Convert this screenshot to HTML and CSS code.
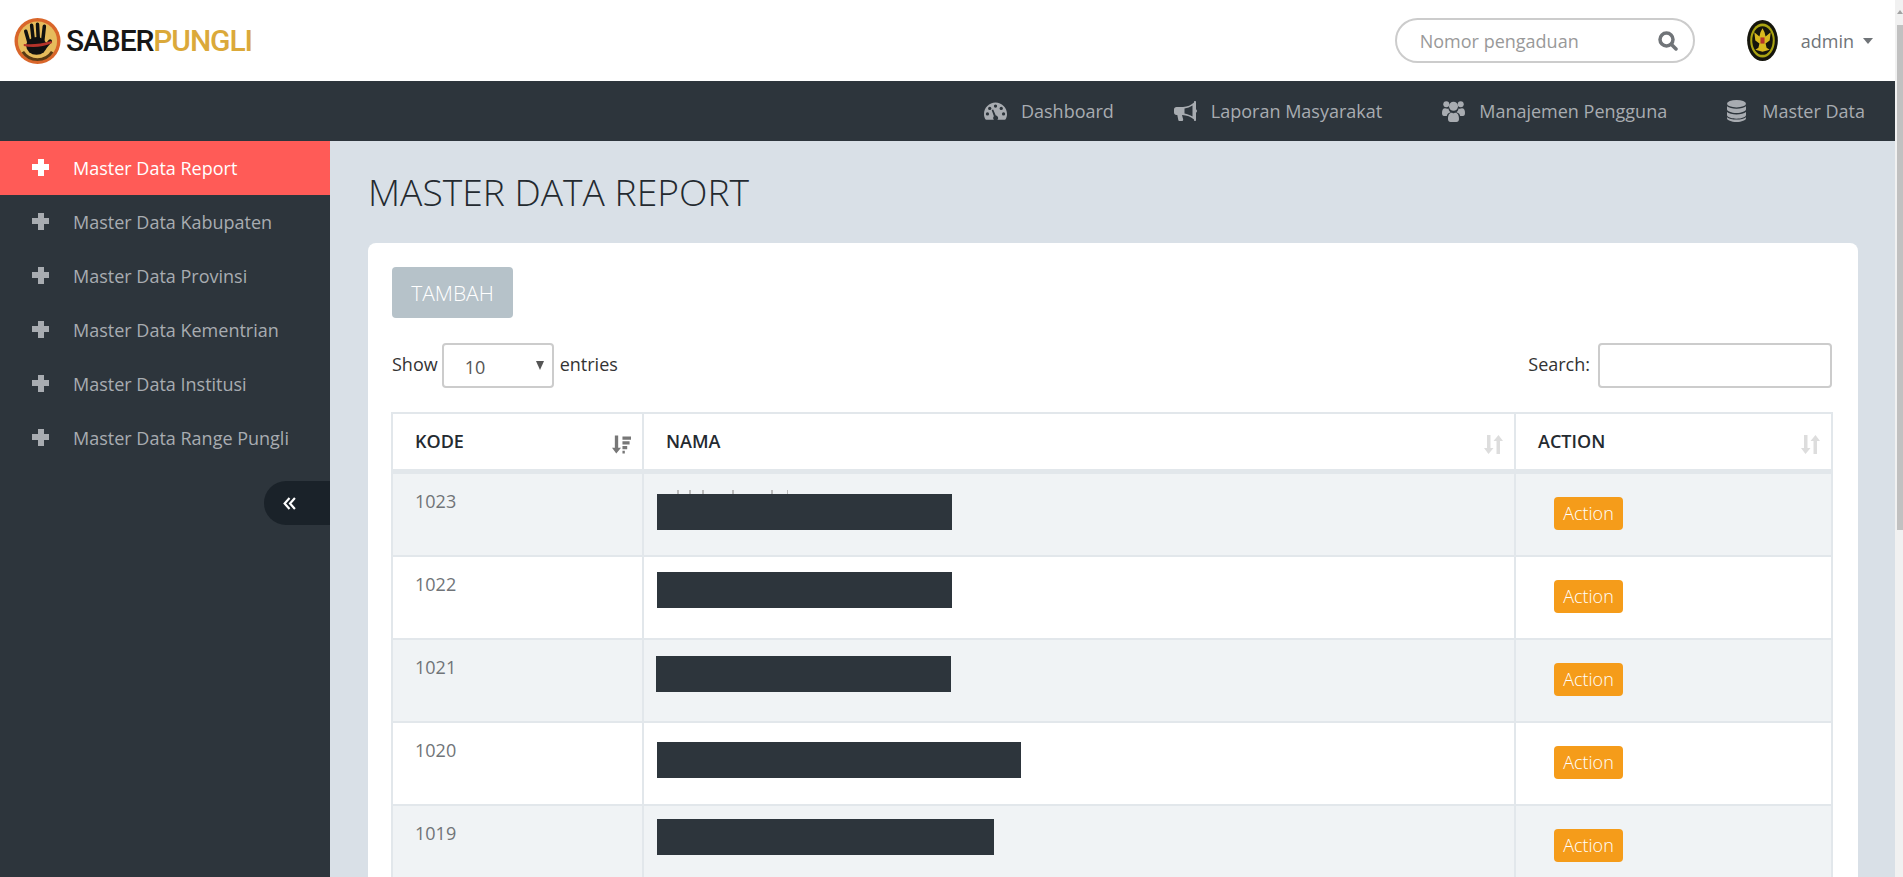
FILE: index.html
```html
<!DOCTYPE html>
<html lang="en">
<head>
    <meta charset="UTF-8">
    <meta name="viewport" content="width=device-width, initial-scale=1.0">
    <title>Master Data Report</title>
    <link rel="stylesheet" href="styles.css">
</head>
<body>
<div class="page">

    <header class="topbar">
        <a class="logo" href="#">
            <svg class="logo-mark" viewBox="0 0 48 48">
                <circle cx="24" cy="24" r="23.500" fill="#d9662a"/>
                <circle cx="24" cy="24" r="20" fill="#e6bb5c"/>
                <path d="M39 35a18 18 0 0 1-30 0" fill="none" stroke="#5a3a14" stroke-width="3"/>
                <g fill="none" stroke="#111" stroke-width="3.600" stroke-linecap="round">
                    <path d="M12 14l4 14M18 8l2 18M24 7l1 19M31 9l-2 18M37 24l-5 6"/>
                </g>
                <ellipse cx="23" cy="29" rx="10.500" ry="9" fill="#111"/>
                <path d="M10 27c8 1 18 0 28-3l1 2c-9 4-20 5-29 3z" fill="#b5332a"/>
            </svg>
            <span class="logo-text">SABER<b>PUNGLI</b></span>
        </a>
        <div class="topbar-right">
            <form class="search-pill">
                <input type="text" placeholder="Nomor pengaduan">
                <svg class="search-icon" viewBox="0 0 20 20"><circle cx="8.500" cy="8.500" r="6.500"/><path d="M13.500 13.500l4.500 4.500"/></svg>
            </form>
            <svg class="user-emblem" viewBox="0 0 30 40">
                <ellipse cx="15" cy="20" rx="15" ry="20" fill="#15150c"/>
                <ellipse cx="15" cy="20" rx="12" ry="16.500" fill="#a9a312"/>
                <ellipse cx="15" cy="20" rx="10" ry="14" fill="#15150c"/>
                <path d="M15 8l2 4 1 4 5-4-1 8-4 3 1 4 3 2-7 2-7-2 3-2 1-4-4-3-1-8 5 4 1-4z" fill="#d8b81e"/>
                <rect x="13" y="17" width="4" height="6" fill="#b5332a"/>
            </svg>
            <a class="user-link" href="#">admin<span class="caret"></span></a>
        </div>
    </header>

    <nav class="mainnav">
        <a href="#">
            <svg viewBox="0 0 24 18"><path d="M12 0C5.400 0 0 5.400 0 12c0 2 .5 3.900 1.400 5.500.2.300.5.500.9.500h19.400c.4 0 .7-.2.900-.5.900-1.600 1.400-3.500 1.400-5.500C24 5.400 18.600 0 12 0z"/><g fill="#2d353c"><circle cx="12" cy="3.800" r="1.700"/><circle cx="6" cy="6.300" r="1.700"/><circle cx="18" cy="6.300" r="1.700"/><circle cx="3.600" cy="12" r="1.700"/><circle cx="20.400" cy="12" r="1.700"/><path d="M9.600 7.500l2.700 6.300a2.600 2.600 0 1 1-2 .8L8 8z"/></g></svg>
            Dashboard
        </a>
        <a href="#">
            <svg viewBox="0 0 23 20"><path d="M21 0c-.6 0-1 .4-1 1v.6C17 4.300 13.500 6 9 6H2.500C1 6 0 7 0 8.500v3C0 13 1 14 2.500 14h.8l1 5c.1.600.6 1 1.200 1h2.500c.8 0 1.300-.7 1.200-1.500L8 14.100c5 .1 9 2 12 4.300v.6c0 .6.4 1 1 1s1-.4 1-1v-7.200c.6-.3 1-.9 1-1.800s-.4-1.500-1-1.800V1c0-.6-.4-1-1-1zM18.500 4.500v11C16 14 13.400 13 10.500 12.500v-5c2.900-.5 5.500-1.500 8-3z"/></svg>
            Laporan Masyarakat
        </a>
        <a href="#">
            <svg class="users" viewBox="0 0 23 22"><circle cx="4.300" cy="4.300" r="3"/><circle cx="18.700" cy="4.300" r="3"/><circle cx="11.500" cy="6.300" r="4.500"/><path d="M0 13c0-3 1-4.800 3-4.800.7 0 1.300.5 2.200.5.500 0 .9-.1 1.300-.3.200 1.600 1 2.900 2.100 3.800C6 12.800 5 14.500 4.800 16H2c-1.300 0-2-1-2-3zM23 13c0 2-.7 3-2 3h-2.800c-.2-1.500-1.200-3.200-3.800-3.800 1.100-.9 1.900-2.200 2.100-3.800.4.200.8.300 1.300.3.900 0 1.500-.5 2.200-.5 2 0 3 1.800 3 4.800zM6 19c0-4 1.500-6.200 3.500-6.200 1 0 1.200.5 2 .5s1-.5 2-.5c2 0 3.500 2.200 3.500 6.200 0 2-1 3-2.500 3h-6C7 22 6 21 6 19z"/></svg>
            Manajemen Pengguna
        </a>
        <a href="#">
            <svg class="db" viewBox="0 0 19 22"><ellipse cx="9.500" cy="3.700" rx="9.500" ry="3.700"/><path d="M0 6.300c1.800 1.600 5.400 2.400 9.500 2.400s7.700-.8 9.500-2.400v3c0 2-4.300 3.700-9.500 3.700S0 11.300 0 9.300zM0 12c1.800 1.600 5.400 2.400 9.500 2.400S17.200 13.600 19 12v3c0 2-4.300 3.700-9.500 3.700S0 17 0 15zM0 17.200c1.800 1.600 5.400 2.400 9.500 2.400s7.700-.8 9.500-2.400v1.100c0 2-4.300 3.700-9.500 3.700S0 20.300 0 18.300z"/></svg>
            Master Data
        </a>
    </nav>

    <div class="main">
        <aside class="sidebar">
            <ul class="side-menu">
                <li class="active"><a href="#"><span class="plus"></span>Master Data Report</a></li>
                <li><a href="#"><span class="plus"></span>Master Data Kabupaten</a></li>
                <li><a href="#"><span class="plus"></span>Master Data Provinsi</a></li>
                <li><a href="#"><span class="plus"></span>Master Data Kementrian</a></li>
                <li><a href="#"><span class="plus"></span>Master Data Institusi</a></li>
                <li><a href="#"><span class="plus"></span>Master Data Range Pungli</a></li>
            </ul>
            <a class="side-toggle" href="#">
                <svg viewBox="0 0 12 12"><path d="M6 1L1.500 6 6 11M11 1L6.500 6 11 11"/></svg>
            </a>
        </aside>

        <main class="content">
            <h1 class="page-title">MASTER DATA REPORT</h1>

            <section class="panel">
                <button class="btn-add" type="button">TAMBAH</button>

                <div class="table-tools">
                    <label class="tool-label">Show
                        <span class="select-wrap">
                            <select>
                                <option>10</option>
                            </select>
                        </span>
                        entries</label>
                    <label class="tool-label">Search: <input class="search-input" type="text"></label>
                </div>

                <table class="data-table">
                    <thead>
                        <tr>
                            <th class="col-kode">KODE
                                <svg class="sort-icon sorted" viewBox="0 0 20 19"><path d="M3 0h3.500v13h3l-5 6-4.500-6h3z"/><path d="M11 1h9v3.500h-9zM11 6h7.500v3.500H11zM11 11h5v3.500h-5zM11 16h2.500v3H11z"/></svg>
                            </th>
                            <th class="col-nama">NAMA
                                <svg class="sort-icon" viewBox="0 0 19 19"><path d="M3 0h3.500v13h3l-5 6-4.500-6h3zM12.500 19V6h-3l5-6 4.500 6h-3v13z"/></svg>
                            </th>
                            <th class="col-action">ACTION
                                <svg class="sort-icon" viewBox="0 0 19 19"><path d="M3 0h3.500v13h3l-5 6-4.500-6h3zM12.500 19V6h-3l5-6 4.500 6h-3v13z"/></svg>
                            </th>
                        </tr>
                    </thead>
                    <tbody>
                        <tr class="first-row">
                            <td>1023</td>
                            <td class="name-cell"><div class="peek"></div><div class="redact r1"></div></td>
                            <td><a class="btn-action" href="#">Action</a></td>
                        </tr>
                        <tr>
                            <td>1022</td>
                            <td class="name-cell"><div class="redact r2"></div></td>
                            <td><a class="btn-action" href="#">Action</a></td>
                        </tr>
                        <tr>
                            <td>1021</td>
                            <td class="name-cell"><div class="redact r3"></div></td>
                            <td><a class="btn-action" href="#">Action</a></td>
                        </tr>
                        <tr>
                            <td>1020</td>
                            <td class="name-cell"><div class="redact r4"></div></td>
                            <td><a class="btn-action" href="#">Action</a></td>
                        </tr>
                        <tr>
                            <td>1019</td>
                            <td class="name-cell"><div class="redact r5"></div></td>
                            <td><a class="btn-action" href="#">Action</a></td>
                        </tr>
                    </tbody>
                </table>
            </section>
        </main>
    </div>

</div>

<div class="scrollbar"><div class="scrollbar-arrow"></div><div class="scrollbar-thumb"></div></div>
</body>
</html>
```

FILE: styles.css
```css
* {
    box-sizing: border-box;
}

html, body {
    margin: 0;
    padding: 0;
    height: 100%;
    overflow: hidden;
}

body {
    display: flex;
    background: #d9e0e7;
    color: #333;
    font-family: "Open Sans", Arial, sans-serif;
    font-size: 18px;
}

a {
    text-decoration: none;
    color: inherit;
}

.page {
    flex: 1;
    min-width: 0;
    height: 100vh;
    overflow: hidden;
    display: flex;
    flex-direction: column;
}

.scrollbar {
    width: 8px;
    flex-shrink: 0;
    background: #f1f1f1;
    padding-left: 2px;
}

.scrollbar-arrow {
    height: 25px;
    padding-top: 10px;
}

.scrollbar-arrow::before {
    content: "";
    display: block;
    width: 0;
    margin: 0 auto;
    border-bottom: 4px solid #a3a3a3;
    border-left: 3px solid transparent;
    border-right: 3px solid transparent;
}

.scrollbar-thumb {
    height: 505px;
    background: #c1c1c1;
}

/* top bar */
.topbar {
    height: 81px;
    flex-shrink: 0;
    background: #fff;
    display: flex;
    justify-content: space-between;
    align-items: center;
    padding: 0 22px 0 14px;
}

.logo {
    display: flex;
    align-items: center;
    gap: 5px;
}

.logo-mark {
    width: 47px;
    height: 48px;
}

.logo-text {
    font-family: Roboto, sans-serif;
    font-size: 30px;
    font-weight: 500;
    letter-spacing: -1.100px;
    color: #161616;
    line-height: 1;
}

.logo-text b {
    font-weight: 500;
    color: #dba93a;
}

.topbar-right {
    display: flex;
    align-items: center;
}

.search-pill {
    width: 300px;
    height: 45px;
    border: 2px solid #ccc;
    border-radius: 23px;
    display: flex;
    align-items: center;
    padding: 0 15px 0 23px;
}

.search-pill input {
    flex: 1;
    min-width: 0;
    border: 0;
    outline: 0;
    padding: 0;
    font: inherit;
}

.search-pill input::placeholder {
    color: #999;
    opacity: 1;
}

.search-icon {
    width: 20px;
    height: 20px;
    fill: none;
    stroke: #707478;
    stroke-width: 3.500;
    stroke-linecap: round;
}

.user-emblem {
    width: 33px;
    height: 41px;
    margin-left: 51px;
}

.user-link {
    margin-left: 22px;
    color: #707478;
    display: flex;
    align-items: center;
}

.caret {
    margin-left: 9px;
    border-top: 6px solid #707478;
    border-left: 5.500px solid transparent;
    border-right: 5.500px solid transparent;
}

/* main nav */
.mainnav {
    height: 60px;
    flex-shrink: 0;
    background: #2d353c;
    display: flex;
    justify-content: flex-end;
}

.mainnav a {
    display: flex;
    align-items: center;
    gap: 14px;
    padding: 0 30px;
    color: #a8acb1;
}

.mainnav svg {
    width: 23px;
    height: 20px;
    fill: #a8acb1;
}

.mainnav svg.users {
    height: 22px;
}

.mainnav svg.db {
    width: 19px;
    height: 22px;
    margin-right: 2px;
}

/* layout */
.main {
    flex: 1;
    display: flex;
    min-height: 0;
}

.sidebar {
    width: 330px;
    flex-shrink: 0;
    background: #2d353c;
    display: flex;
    flex-direction: column;
}

.side-menu {
    list-style: none;
    margin: 0;
    padding: 0;
}

.side-menu a {
    height: 54px;
    display: flex;
    align-items: center;
    padding-left: 32px;
    color: #a8acb1;
}

.side-menu .active a {
    background: #ff5b57;
    color: #fff;
}

.plus {
    width: 17px;
    height: 17px;
    margin-right: 24px;
    position: relative;
    top: -1px;
    border-radius: 1px;
    background:
        linear-gradient(currentColor, currentColor) center / 100% 6px no-repeat,
        linear-gradient(currentColor, currentColor) center / 6px 100% no-repeat;
}

.side-toggle {
    align-self: flex-end;
    width: 66px;
    height: 44px;
    margin-top: 16px;
    background: #1a2229;
    border-radius: 22px 0 0 22px;
    display: flex;
    align-items: center;
    padding-left: 19px;
}

.side-toggle svg {
    width: 13px;
    height: 13px;
    fill: none;
    stroke: #fff;
    stroke-width: 2;
}

.content {
    flex: 1;
    min-width: 0;
    padding: 0 37px 0 38px;
}

.page-title {
    margin: 0;
    height: 102px;
    padding-top: 26px;
    font-size: 37.200px;
    line-height: 50px;
    font-weight: 300;
    color: #242a30;
}

.panel {
    background: #fff;
    border-radius: 8px;
    padding: 24px;
}

.btn-add {
    display: block;
    width: 121px;
    height: 51px;
    border: 0;
    border-radius: 4px;
    background: #b6c2c9;
    color: #fff;
    font-family: inherit;
    font-size: 21px;
    font-weight: 300;
    padding: 0;
}

.table-tools {
    display: flex;
    justify-content: space-between;
    align-items: center;
    height: 44px;
    margin-top: 25px;
    padding-right: 2px;
}

.tool-label {
    display: flex;
    align-items: center;
    gap: 5px;
    color: #333;
    line-height: 44px;
    margin-top: -3px;
}

.select-wrap {
    position: relative;
    display: block;
    margin: 3px 1px 0 -1px;
}

.select-wrap::after {
    content: "";
    position: absolute;
    right: 10px;
    top: 18px;
    border-top: 9px solid #555;
    border-left: 4px solid transparent;
    border-right: 4px solid transparent;
}

.select-wrap select {
    display: block;
    width: 112px;
    height: 45px;
    appearance: none;
    background: #fff;
    border: 2px solid #ccc;
    border-radius: 4px;
    padding: 0 0 0 21px;
    font: inherit;
    color: #555;
}

.search-input {
    width: 234px;
    height: 45px;
    margin-left: 3px;
    margin-top: 3px;
    border: 2px solid #ccc;
    border-radius: 4px;
    font: inherit;
}

.data-table {
    width: 1440px;
    margin: 25px 0 0 -1px;
    border-collapse: collapse;
    table-layout: fixed;
}

.data-table th {
    position: relative;
    height: 58px;
    padding: 0 22px;
    text-align: left;
    font-weight: 600;
    color: #242a30;
    background: #fff;
    border: 2px solid #e2e7eb;
    border-bottom-width: 5px;
}

.col-kode { width: 251px; }
.col-nama { width: 872px; }
.col-action { width: 317px; }

.sort-icon {
    position: absolute;
    right: 11px;
    top: 21px;
    width: 19px;
    height: 19px;
    fill: #ddd;
}

.sort-icon.sorted {
    fill: #777;
}

.data-table td {
    height: 83px;
    padding: 15px 22px 0;
    vertical-align: top;
    line-height: 24px;
    color: #707478;
    border: 2px solid #e2e7eb;
}

.data-table .first-row td {
    height: 85px;
}

.data-table tbody tr:nth-child(odd) td {
    background: #f0f3f5;
}

.data-table .name-cell {
    padding: 0 0 0 13px;
}

.redact {
    background: #2d353c;
    height: 36px;
}

.peek {
    width: 131px;
    height: 4px;
    margin-top: 16px;
    background: linear-gradient(90deg,
        transparent 0 20px, #bbb 20px 22px, transparent 22px 32px, #bbb 32px 34px,
        transparent 34px 45px, #bbb 45px 47px, transparent 47px 75px, #bbb 75px 77px,
        transparent 77px 114px, #bbb 114px 116px, transparent 116px 130px, #bbb 130px 131px);
}

.r1 { width: 295px; }
.r2 { width: 295px; margin-top: 15px; }
.r3 { width: 295px; margin-top: 16px; margin-left: -1px; }
.r4 { width: 364px; margin-top: 19px; }
.r5 { width: 337px; margin-top: 13px; }

.btn-action {
    display: inline-block;
    margin: 8px 0 0 16px;
    width: 69px;
    height: 33px;
    line-height: 32px;
    text-align: center;
    background: #f59c1a;
    color: #fff;
    border-radius: 4px;
    font-weight: 300;
}
```
